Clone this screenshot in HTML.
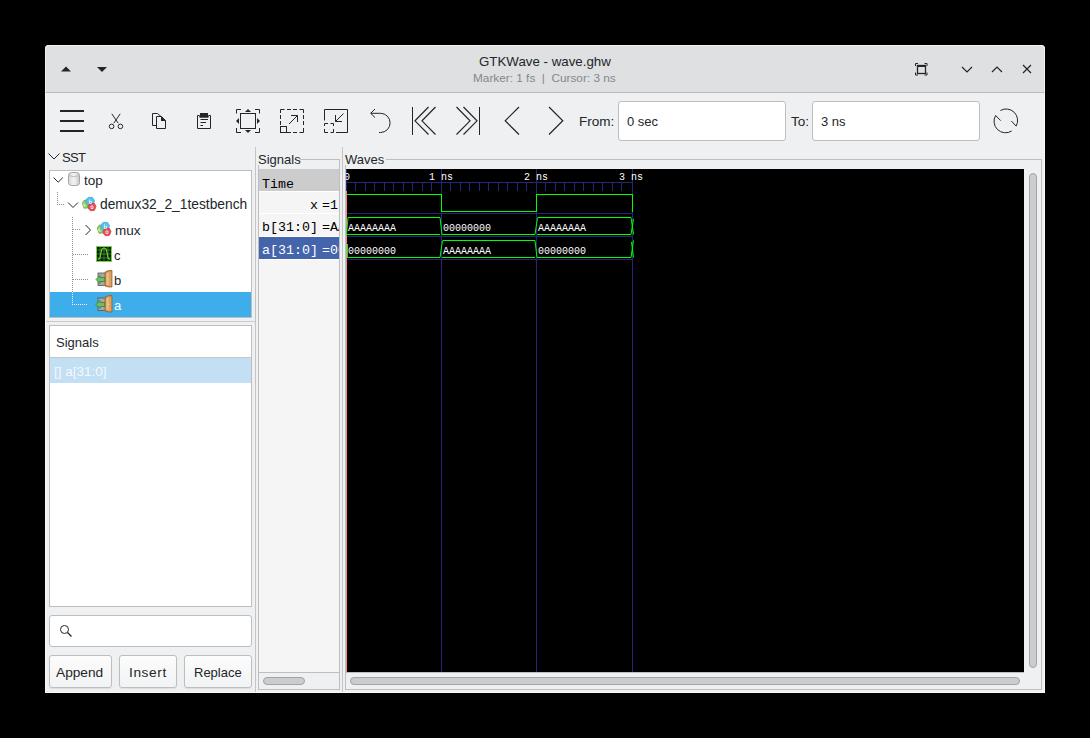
<!DOCTYPE html>
<html><head><meta charset="utf-8">
<style>
*{margin:0;padding:0;box-sizing:border-box}
html,body{width:1090px;height:738px;background:#000;overflow:hidden;position:relative;font-family:"Liberation Sans",sans-serif;color:#232629}
.a{position:absolute}
.t{position:absolute;white-space:pre;line-height:1}
svg{position:absolute;overflow:visible}
.mono{font-family:"Liberation Mono",monospace}
</style></head><body>
<!-- window -->
<div class="a" id="win" style="left:45px;top:45px;width:1000px;height:648px;background:#eff0f1;border-radius:4px 4px 0 0;overflow:hidden">
  <div class="a" style="left:0;top:0;width:1000px;height:47px;background:#dee0e2"></div>
  <div class="a" style="left:0;top:47px;width:1000px;height:1px;background:#b9bbbd"></div>
</div>
<!-- window outline highlight -->
<div class="a" style="left:45px;top:45px;width:1000px;height:648px;border:1px solid rgba(255,255,255,0.55);border-radius:4px 4px 0 0"></div>

<!-- titlebar -->
<svg style="left:0;top:0" width="1090" height="100">
  <path d="M61 71.5 L66 66.5 L71 71.5 Z" fill="#232629"/>
  <path d="M97 67 L107 67 L102 72 Z" fill="#232629"/>
  <!-- keep above -->
  <g fill="none" stroke="#232629" stroke-width="1.3">
    <rect x="917.5" y="65.5" width="8" height="8"/>
  </g>
  <rect x="917" y="65" width="9" height="2" fill="#232629"/>
  <path d="M915.5 66 V63.5 H918 M924.5 63.5 H927 V66 M927 72.5 V75 H924.5 M918 75 H915.5 V72.5" fill="none" stroke="#232629" stroke-width="1"/>
  <path d="M962 67 L967 72 L972 67" fill="none" stroke="#232629" stroke-width="1.2"/>
  <path d="M992 72 L997 67 L1002 72" fill="none" stroke="#232629" stroke-width="1.2"/>
  <path d="M1023 65 L1031 73 M1031 65 L1023 73" fill="none" stroke="#232629" stroke-width="1.2"/>
</svg>
<div class="t" style="left:479px;top:55px;font-size:13.3px;color:#232629">GTKWave - wave.ghw</div>
<div class="t" style="left:473px;top:73px;font-size:11.8px;color:#84888b">Marker: 1 fs  |  Cursor: 3 ns</div>

<!-- toolbar icons -->
<svg style="left:0;top:0" width="1090" height="150">
  <g fill="#232629">
    <rect x="60" y="110" width="24" height="2"/>
    <rect x="60" y="120" width="24" height="2"/>
    <rect x="60" y="130" width="24" height="2"/>
  </g>
  <g fill="none" stroke="#232629" stroke-width="1">
    <!-- scissors -->
    <path d="M111.8 113.8 L118.2 123.2 M120.2 113.8 L113.8 123.2"/>
    <circle cx="111.6" cy="126.4" r="2.3"/>
    <circle cx="120.4" cy="126.4" r="2.3"/>
    <!-- copy -->
    <path d="M156.5 125.5 H152.5 V113.5 H157.5 L161 116.5"/>
    <path d="M156.5 116.5 H161.5 L165.5 120.5 V128.5 H156.5 Z"/>
    <!-- paste -->
    <path d="M199.5 115.5 H197.5 V128.5 H210.5 V115.5 H208.5"/>
    <path d="M200.5 119.5 H208 M200.5 122.5 H206 M200.5 125.5 H203"/>
  </g>
  <path d="M161 116 L166 121 L161 121 Z" fill="#232629"/>
  <rect x="200" y="113" width="8" height="4.5" fill="#232629"/>
  <rect x="199.3" y="115.5" width="9.4" height="2" fill="#232629"/>
  <g fill="none" stroke="#232629" stroke-width="1">
    <!-- zoom fit -->
    <path d="M236.5 113.5 V109.5 H241 M255 109.5 H259.5 V113.5 M259.5 128 V132.5 H255 M241 132.5 H236.5 V128"/>
    <rect x="240.5" y="113.5" width="15" height="15"/>
    <!-- zoom in -->
    <path d="M280.5 113 V109.5 H284.5 M287 109.5 H291 M293 109.5 H297 M299.5 109.5 H303.5 V113 M303.5 115 V119 M303.5 121 V125 M303.5 128 V132.5 H299.5 M297 132.5 H293 M291 132.5 H287 M280.5 125 V121 M280.5 119 V115"/>
    <rect x="280.5" y="126.5" width="6" height="6"/>
    <path d="M289 124 L297.5 115.5 M291 115.5 H297.5 V122"/>
    <!-- zoom out -->
    <path d="M324.5 120.5 V109.5 H347.5 V132.5 H336"/>
    <path d="M324.5 126 V123.5 H328 M330.5 123.5 H333.5 V126 M333.5 129 V132.5 H330.5 M328 132.5 H324.5 V129"/>
    <path d="M343.5 113.5 L335.5 121.5 M335.5 115 V121.5 H342"/>
    <!-- undo -->
    <path d="M375 109 L370.7 113.3 L375 117.6 M370.7 113.3 H380.5 A9.6 9.6 0 0 1 380.5 132.5 H379"/>
    <!-- first -->
    <path d="M412.5 107 V135"/>
    <path stroke-width="1.2" d="M428.5 107 L415 120.8 L428.5 134.5 M435.5 107 L422 120.8 L435.5 134.5"/>
    <!-- last -->
    <path d="M479.5 107 V135"/>
    <path stroke-width="1.2" d="M456.5 107 L470 120.8 L456.5 134.5 M463.5 107 L477 120.8 L463.5 134.5"/>
    <!-- prev / next -->
    <path stroke-width="1.2" d="M519 107 L505.2 120.8 L519 134.5"/>
    <path stroke-width="1.2" d="M549 107 L562.8 120.8 L549 134.5"/>
    <!-- refresh -->
    <path d="M1000.4 110.5 A11.5 11.5 0 0 1 1016.2 126"/>
    <path d="M1011.7 131 A11.5 11.5 0 0 1 995.6 115.5"/>
    <path d="M995.6 115.5 L1000.7 120.6 M1016.2 126.2 L1011.4 121"/>
  </g>
  <g fill="#232629">
    <path d="M245 112 L248 109 L251 112 Z"/>
    <path d="M245 130 L251 130 L248 133 Z"/>
    <path d="M239 118 L239 124 L236 121 Z"/>
    <path d="M257 118 L257 124 L260 121 Z"/>
  </g>
</svg>
<div class="t" style="left:579px;top:115px;font-size:13.5px">From:</div>
<div class="a" style="left:618px;top:101px;width:168px;height:40px;background:#fff;border:1px solid #bcbebf;border-radius:3px"></div>
<div class="t" style="left:627px;top:115px;font-size:13px">0 sec</div>
<div class="t" style="left:791px;top:115px;font-size:13.5px">To:</div>
<div class="a" style="left:812px;top:101px;width:168px;height:40px;background:#fff;border:1px solid #bcbebf;border-radius:3px"></div>
<div class="t" style="left:821px;top:115px;font-size:13px">3 ns</div>

<!-- pane separators -->
<div class="a" style="left:255px;top:147px;width:1px;height:545px;background:#c2c4c6"></div>
<div class="a" style="left:342px;top:147px;width:1px;height:545px;background:#c2c4c6"></div>

<!-- LEFT PANE -->
<svg style="left:0;top:0" width="260" height="200">
  <path d="M48.5 153.5 L54 159 L59.5 153.5" fill="none" stroke="#232629" stroke-width="1"/>
</svg>
<div class="t" style="left:62px;top:151px;font-size:13px;letter-spacing:-0.7px">SST</div>
<div class="a" style="left:49px;top:170px;width:203px;height:148px;background:#fff;border:1px solid #bcbebf"></div>
<div class="a" style="left:50px;top:292px;width:201px;height:25px;background:#3daee9"></div>
<div class="a" style="left:46px;top:321px;width:209px;height:1px;background:#c8cacc"></div>
<svg style="left:0;top:0" width="260" height="330">
  <defs>
    <linearGradient id="cyl" x1="0" x2="1" y1="0" y2="0">
      <stop offset="0" stop-color="#d8d8d8"/><stop offset="0.5" stop-color="#f4f4f4"/><stop offset="1" stop-color="#c8c8c8"/>
    </linearGradient>
  </defs>
  <!-- dotted tree lines -->
  <g stroke="#8a8c8e" stroke-width="1" stroke-dasharray="1 1" fill="none" shape-rendering="crispEdges">
    <path d="M57.5 192 V204.5 H65"/>
    <path d="M72.5 217 V292"/>
    <path d="M72.5 229.5 H80 M72.5 254.5 H88 M72.5 279.5 H88"/>
  </g>
  <g stroke="#ffffff" stroke-width="1" stroke-dasharray="1 1" fill="none" shape-rendering="crispEdges">
    <path d="M72.5 292 V304.5 H88"/>
  </g>
  <!-- chevrons -->
  <g fill="none" stroke="#232629" stroke-width="1">
    <path d="M53.5 177.5 L58.2 182.2 L62.9 177.5"/>
    <path d="M68 202.5 L73 207.5 L78 202.5"/>
    <path d="M85.5 225 L90.5 230 L85.5 235"/>
  </g>
  <!-- cylinder -->
  <rect x="68.5" y="172.5" width="11" height="13" rx="3" fill="url(#cyl)" stroke="#a4a4a4"/>
  <path d="M69 175.5 Q74 178 79 175.5" fill="none" stroke="#bdbdbd"/>
  <!-- module icons -->
  <g id="mod">
    <path d="M82.3 203 L84 200.3 L87.5 200.3 L88.8 204 L87.5 208 L84 208.3 Z" fill="#8fd060" stroke="#5aa838" stroke-width="0.7"/>
    <path d="M86 199.5 L88.5 197.3 L92.5 197.5 L94.5 200.5 L93.5 204.5 L89 205.3 L86 203 Z" fill="#5cc0ec" stroke="#3a9ed0" stroke-width="0.7"/>
    <path d="M88.3 205.5 L90.5 203.3 L94.5 203.5 L96 206.5 L94.5 210.3 L90.5 210.8 L88.3 208.5 Z" fill="#ec4a52" stroke="#c83038" stroke-width="0.7"/>
    <path d="M89.5 199.5 V203.5 H91.5 V201.5 H89.5 M91 206 H93 V208.5 H91 Z M84 203 V206 H86" fill="none" stroke="#e8f6ff" stroke-width="0.8"/>
  </g>
  <use href="#mod" x="15" y="25"/>
  <!-- c icon -->
  <rect x="96.5" y="246.5" width="15" height="15" fill="#0c1a08" stroke="#7ad050" stroke-width="1"/>
  <g stroke="#3f8a2a" stroke-width="0.9">
    <path d="M100 247 V261 M104 247 V261 M108 247 V261 M97 250 H111 M97 254 H111 M97 258 H111"/>
  </g>
  <path d="M98 259.5 L100 258 L101.8 249 L103 248.3 H105 L106.2 249 L108 258 L110 259.5" fill="none" stroke="#6ad83a" stroke-width="1.1"/>
  <!-- door icons -->
  <g id="door">
    <rect x="98" y="273" width="7.5" height="12.5" fill="#a8a8a8" stroke="#555" stroke-width="0.8"/>
    <path d="M96 279.5 L100 275.5 V277.5 H105 V281.5 H100 V283.5 Z" fill="#6cc060" stroke="#2a7a2a" stroke-width="0.7"/>
    <path d="M105 272 L108.5 270.5 H112 V287 H108.5 L105 286 Z" fill="#c98a48" stroke="#9a5a20" stroke-width="0.7"/>
    <path d="M106.3 273 L108.8 272 V285.5 L106.3 285 Z" fill="#e8c090"/>
    <rect x="109" y="272" width="2.2" height="14" fill="#d9a468"/>
    <circle cx="108.2" cy="279.5" r="0.6" fill="#ffe020"/>
  </g>
  <use href="#door" x="0" y="25"/>
</svg>
<div class="t" style="left:84px;top:174px;font-size:13.5px">top</div>
<div class="t" style="left:100px;top:198px;font-size:13.8px">demux32_2_1testbench</div>
<div class="t" style="left:115px;top:224px;font-size:13.5px">mux</div>
<div class="t" style="left:114px;top:249px;font-size:13px">c</div>
<div class="t" style="left:114px;top:274px;font-size:13px">b</div>
<div class="t" style="left:114px;top:299px;font-size:13px;color:#fff">a</div>

<div class="a" style="left:49px;top:325px;width:203px;height:282px;background:#fff;border:1px solid #bcbebf"></div>
<div class="a" style="left:50px;top:357px;width:201px;height:1px;background:#c4c6c8"></div>
<div class="a" style="left:50px;top:358px;width:201px;height:25px;background:#c2dff3"></div>
<div class="t" style="left:56px;top:336px;font-size:13px">Signals</div>
<div class="t" style="left:54px;top:365px;font-size:13.5px;color:#f4f9fd">[] a[31:0]</div>

<div class="a" style="left:49px;top:615px;width:203px;height:32px;background:#fff;border:1px solid #bcbebf;border-radius:3px"></div>
<svg style="left:0;top:0" width="100" height="700">
  <circle cx="64.5" cy="629.5" r="4" fill="none" stroke="#232629" stroke-width="1"/>
  <path d="M67.5 632.5 L71.5 636.5" stroke="#232629" stroke-width="1.2"/>
</svg>
<div class="a" style="left:49px;top:655px;width:63px;height:33px;background:linear-gradient(#fcfcfc,#f2f3f4);border:1px solid #bcbebf;border-radius:3px;box-shadow:0 1px 1px rgba(0,0,0,0.08)"></div>
<div class="a" style="left:119px;top:655px;width:58px;height:33px;background:linear-gradient(#fcfcfc,#f2f3f4);border:1px solid #bcbebf;border-radius:3px;box-shadow:0 1px 1px rgba(0,0,0,0.08)"></div>
<div class="a" style="left:184px;top:655px;width:68px;height:33px;background:linear-gradient(#fcfcfc,#f2f3f4);border:1px solid #bcbebf;border-radius:3px;box-shadow:0 1px 1px rgba(0,0,0,0.08)"></div>
<div class="t" style="left:56px;top:666px;font-size:13.7px">Append</div>
<div class="t" style="left:129px;top:666px;font-size:13.7px;letter-spacing:0.6px">Insert</div>
<div class="t" style="left:194px;top:666px;font-size:13px">Replace</div>

<!-- MIDDLE PANE: Signals frame -->
<div class="a" style="left:258px;top:159px;width:82px;height:531px;border:1px solid #bcbebf"></div>
<div class="a" style="left:257px;top:150px;width:43px;height:15px;background:#eff0f1"></div>
<div class="t" style="left:258px;top:153px;font-size:13px">Signals</div>
<div class="a" style="left:259px;top:169px;width:80px;height:503px;background:#f5f5f5;overflow:hidden">
  <div class="a" style="left:0;top:0;width:80px;height:22px;background:#cccccc"></div>
  <div class="a" style="left:0;top:22px;width:80px;height:1px;background:#fff"></div>
  <div class="a" style="left:0;top:44px;width:80px;height:1px;background:#fff"></div>
  <div class="a" style="left:0;top:67px;width:80px;height:1px;background:#fff"></div>
  <div class="a" style="left:0;top:68px;width:80px;height:22px;background:#4464ac"></div>
  <div class="a" style="left:0;top:90px;width:80px;height:1px;background:#fff"></div>
  <div class="t mono" style="left:3px;top:9px;font-size:13.3px;color:#000">Time</div>
  <div class="t mono" style="left:51px;top:30px;font-size:13.3px;color:#000">x</div>
  <div class="t mono" style="left:63px;top:30px;font-size:13.3px;color:#000">=1</div>
  <div class="t mono" style="left:3px;top:52px;font-size:13.3px;color:#000">b[31:0]</div>
  <div class="t mono" style="left:63px;top:52px;font-size:13.3px;color:#000">=AAAAAAAA</div>
  <div class="t mono" style="left:3px;top:75px;font-size:13.3px;color:#fff">a[31:0]</div>
  <div class="t mono" style="left:63px;top:75px;font-size:13.3px;color:#fff">=00000000</div>
</div>
<div class="a" style="left:259px;top:672px;width:80px;height:1px;background:#bcbebf"></div>
<div class="a" style="left:263px;top:677px;width:42px;height:8px;background:#cbcccd;border:1px solid #a2a4a6;border-radius:4px"></div>

<!-- RIGHT PANE: Waves frame -->
<div class="a" style="left:345px;top:159px;width:697px;height:531px;border:1px solid #bcbebf"></div>
<div class="a" style="left:344px;top:150px;width:42px;height:15px;background:#eff0f1"></div>
<div class="t" style="left:345px;top:153px;font-size:13px">Waves</div>
<div class="a" style="left:346px;top:169px;width:678px;height:503px;background:#000;overflow:hidden">
  <svg style="left:0;top:0" width="678" height="503" id="wave">
<g shape-rendering="crispEdges" stroke="#25257c" stroke-width="1" fill="none">
<path d="M0 13.5 H287"/>
<path d="M0.5 0 V503 M9.5 13 V22 M19.5 13 V22 M28.5 13 V22 M38.5 13 V22 M47.5 13 V22 M57.5 13 V22 M66.5 13 V22 M76.5 13 V22 M85.5 13 V22 M95.5 0 V503 M104.5 13 V22 M114.5 13 V22 M123.5 13 V22 M133.5 13 V22 M142.5 13 V22 M152.5 13 V22 M161.5 13 V22 M171.5 13 V22 M180.5 13 V22 M190.5 0 V503 M199.5 13 V22 M209.5 13 V22 M218.5 13 V22 M228.5 13 V22 M237.5 13 V22 M247.5 13 V22 M256.5 13 V22 M266.5 13 V22 M275.5 13 V22 M286.5 0 V503"/>
<path d="M0 44.5 H287 M0 67.5 H287 M0 90.5 H287"/>
</g>
<rect x="0" y="22" width="1" height="481" fill="#fb8383"/>
<g stroke="#00ff00" stroke-width="1" fill="none">
<path shape-rendering="crispEdges" d="M1 25.5 H95.5 V42.5 H190.5 V25.5 H286.5 V42.5"/>
<path shape-rendering="crispEdges" d="M1 65.5 H94 M96 65.5 H189 M191 65.5 H285 M2 48.5 H94 M192 48.5 H285 M1 88.5 H94 M96 88.5 H189 M191 88.5 H285 M97 71.5 H189"/>
<path d="M0.5 65.5 L2 48.5 M94 48.5 L96 65.5 M189 65.5 L191.5 48.5 M285 48.5 L287.5 65.5 M285 65.5 L287.5 50"/>
<path d="M94 88.5 L96.5 71.5 M189 71.5 L191 88.5 M285 88.5 L287.5 71.5 M285.5 73 L287.5 88.5 M1.5 75 V88.5"/>
</g>
<g font-family="Liberation Mono" font-size="11.6" fill="#fff" lengthAdjust="spacingAndGlyphs">
<text x="-2" y="11" textLength="6" lengthAdjust="spacingAndGlyphs">0</text><text x="83" y="11" textLength="24" lengthAdjust="spacingAndGlyphs">1 ns</text><text x="178" y="11" textLength="24" lengthAdjust="spacingAndGlyphs">2 ns</text><text x="273" y="11" textLength="24" lengthAdjust="spacingAndGlyphs">3 ns</text>
<text x="2" y="62" textLength="48" lengthAdjust="spacingAndGlyphs">AAAAAAAA</text><text x="97" y="62" textLength="48" lengthAdjust="spacingAndGlyphs">00000000</text><text x="192" y="62" textLength="48" lengthAdjust="spacingAndGlyphs">AAAAAAAA</text>
<text x="2" y="85" textLength="48" lengthAdjust="spacingAndGlyphs">00000000</text><text x="97" y="85" textLength="48" lengthAdjust="spacingAndGlyphs">AAAAAAAA</text><text x="192" y="85" textLength="48" lengthAdjust="spacingAndGlyphs">00000000</text>
</g>
  </svg>
</div>
<div class="a" style="left:346px;top:672px;width:678px;height:1px;background:#bcbebf"></div>
<div class="a" style="left:350px;top:677px;width:670px;height:8px;background:#cbcccd;border:1px solid #a2a4a6;border-radius:4px"></div>
<div class="a" style="left:1029px;top:173px;width:8px;height:495px;background:#cbcccd;border:1px solid #a2a4a6;border-radius:4px"></div>

</body></html>
